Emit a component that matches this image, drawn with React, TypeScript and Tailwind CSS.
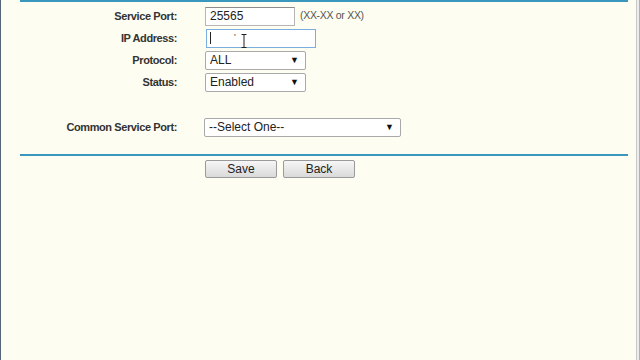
import React from "react";

function Caret() {
  return (
    <svg width="6" height="14" viewBox="0 0 6 14" className="absolute left-[34px] top-[4px]">
      <path d="M0.5 0.5h5M3 0.5v13M0.5 13.5h5" stroke="#222" strokeWidth="1" fill="none" />
    </svg>
  );
}

function Arrow() {
  return <span className="text-[9px] text-[#111] leading-none">▼</span>;
}

function Select({ value, width }: { value: string; width: string }) {
  return (
    <div
      className={`${width} h-[19px] bg-white border border-[#a9a9a9] rounded-[2px] flex items-center justify-between pl-[4px] pr-[6px] text-[12px] text-[#222]`}
    >
      <span>{value}</span>
      <Arrow />
    </div>
  );
}

function Row({ label, children }: { label: string; children: React.ReactNode }) {
  return (
    <div className="h-[22px] flex items-center">
      <div className="w-[176px] text-right text-[11px] font-bold tracking-[-0.4px] text-[#333]">{label}</div>
      <div className="ml-[28px] flex items-center">{children}</div>
    </div>
  );
}

export default function App() {
  return (
    <div className="w-[640px] h-[360px] bg-[#fdfdf1] flex font-['Liberation_Sans',Arial,sans-serif]">
      <div className="w-[1px] bg-[#55657a]" />
      <div className="flex-1 flex flex-col">
        <div className="ml-[19px] mr-[8px] h-[2px] bg-[#3a98be]" />
        <div className="mt-[3px] flex flex-col">
          <Row label="Service Port:">
            <div className="w-[90px] h-[19px] bg-white border border-[#b5b5b5] border-t-[#8c8c8c] flex items-center pl-[4px] text-[12px] text-[#222]">
              25565
            </div>
            <span className="ml-[5px] text-[10.5px] tracking-[-0.3px] text-[#555]">(XX-XX or XX)</span>
          </Row>
          <Row label="IP Address:">
            <div className="relative ml-[1px] w-[110px] h-[19px] bg-white border border-[#7aaee0] flex items-center pl-[3px]">
              <div className="w-[1px] h-[12px] bg-[#222]" />
              <span className="absolute left-[27px] top-[1px] text-[9px] text-[#444]">'</span>
              <Caret />
            </div>
          </Row>
          <Row label="Protocol:">
            <Select value="ALL" width="w-[101px]" />
          </Row>
          <Row label="Status:">
            <Select value="Enabled" width="w-[101px]" />
          </Row>
        </div>
        <div className="mt-[23px]">
          <Row label="Common Service Port:">
            <div className="-ml-[1px]">
              <Select value="--Select One--" width="w-[197px]" />
            </div>
          </Row>
        </div>
        <div className="mt-[16px] ml-[19px] mr-[8px] h-[2px] bg-[#3a98be]" />
        <div className="mt-[4px] flex gap-[6px] pl-[204px]">
          <button className="w-[72px] h-[18px] border border-[#9a9a9a] rounded-[2px] bg-gradient-to-b from-[#f6f6f6] to-[#dadada] text-[12px] leading-none text-[#222]">
            Save
          </button>
          <button className="w-[72px] h-[18px] border border-[#9a9a9a] rounded-[2px] bg-gradient-to-b from-[#f6f6f6] to-[#dadada] text-[12px] leading-none text-[#222]">
            Back
          </button>
        </div>
      </div>
      <div className="w-[4px] flex">
        <div className="w-[1px] bg-[#c8c8c8]" />
        <div className="w-[2px] bg-[#ececec]" />
        <div className="w-[1px] bg-[#b0b0b0]" />
      </div>
    </div>
  );
}
